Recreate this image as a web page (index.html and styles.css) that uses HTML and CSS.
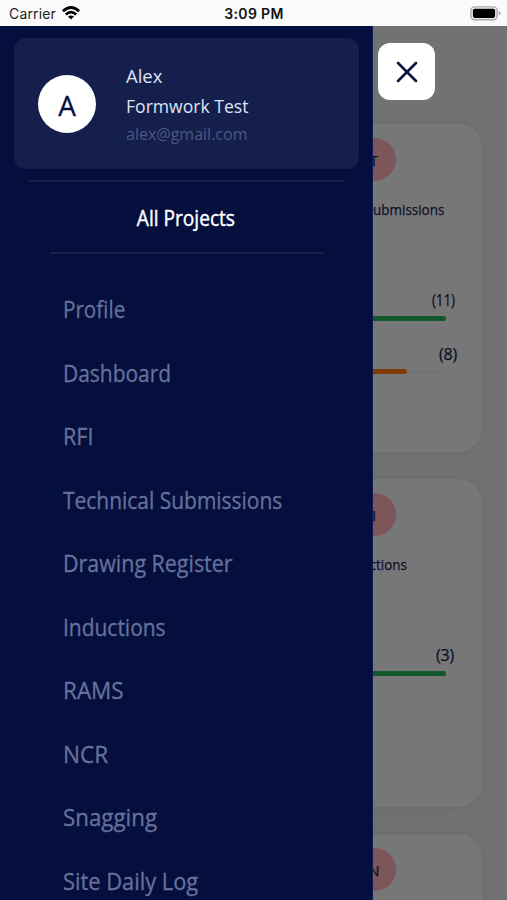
FILE: index.html
```html
<!DOCTYPE html>
<html lang="en">
<head>
<meta charset="utf-8">
<title>All Projects</title>
<link rel="stylesheet" href="styles.css">
</head>
<body>
<header class="status">
  <div class="carrier"><span>Carrier</span>
    <svg class="wifi" width="18" height="14" viewBox="0 0 18 14" fill="none" stroke="#000" stroke-width="2.7"><path d="M.9 5.2Q9-2.2 17.1 5.2"/><path d="M3.8 8.5Q9 3.7 14.2 8.5"/><path d="M9 13.6 6 10.6Q9 8.2 12 10.6Z" fill="#000" stroke="none"/></svg>
  </div>
  <div class="clock">3:09 PM</div>
  <svg class="battery" width="31" height="15" viewBox="0 0 31 15"><rect x=".9" y=".9" width="26.2" height="12.8" rx="3.6" fill="#eee" stroke="#aaa" stroke-width="1.4"/><rect x="2.9" y="2.7" width="22.2" height="9.2" rx="1.8"/><path d="M28.6 5q2 .8 2 2.3t-2 2.3z" fill="#aaa"/></svg>
</header>
<div class="stage">
  <main class="cards">
    <section class="card">
      <div class="badge">T</div>
      <h2>Technical Submissions</h2>
      <div class="count">(11)</div>
      <div class="track"><div class="bar green"></div></div>
      <div class="count second">(8)</div>
      <div class="track"><div class="bar orange"></div></div>
    </section>
    <section class="card">
      <div class="badge">I</div>
      <h2>Inductions</h2>
      <div class="count">(3)</div>
      <div class="track"><div class="bar green"></div></div>
    </section>
    <section class="card">
      <div class="badge">N</div>
    </section>
  </main>
  <div class="overlay">
    <aside class="drawer">
      <div class="profile">
        <div class="avatar">A</div>
        <div class="who">
          <div class="name">Alex</div>
          <div class="name company">Formwork Test</div>
          <div class="mail">alex@gmail.com</div>
        </div>
      </div>
      <div class="projects"><span>All Projects</span></div>
      <nav class="menu">
        <a>Profile</a>
        <a>Dashboard</a>
        <a>RFI</a>
        <a>Technical Submissions</a>
        <a>Drawing Register</a>
        <a>Inductions</a>
        <a>RAMS</a>
        <a>NCR</a>
        <a>Snagging</a>
        <a>Site Daily Log</a>
      </nav>
    </aside>
    <button class="close" aria-label="Close"><svg width="22" height="22" viewBox="0 0 22 22" fill="none" stroke="#07103f" stroke-width="2.6" stroke-linecap="round"><path d="m2 2 18 18M20 2 2 20"/></svg></button>
  </div>
</div>
</body>
</html>
```

FILE: styles.css
```css
* { box-sizing: border-box; }
body {
  margin: 0;
  height: 900px;
  overflow: hidden;
  display: flex;
  flex-direction: column;
  font-family: "Open Sans", "Noto Sans", sans-serif;
}
.status {
  flex: none;
  height: 26px;
  padding: 2px 6px 0 9px;
  display: grid;
  grid-template-columns: 1fr auto 1fr;
  align-items: center;
  background: #fafafa;
  font-family: Inter, sans-serif;
  font-size: 14px;
  line-height: 24px;
  color: #222;
}
.carrier { display: flex; align-items: center; gap: 6px; letter-spacing: .15px; }
.wifi { margin-top: -2px; }
.clock { font-weight: 600; color: #111; letter-spacing: .35px; margin-left: -2px; }
.battery { justify-self: end; margin-top: -2px; }
.stage { position: relative; flex: 1; min-height: 0; overflow: hidden; background: #727272; }
.cards { display: flex; flex-direction: column; gap: 27px; padding: 98px 25px 0 266px; }
.card {
  flex: none;
  height: 328px;
  padding-top: 14px;
  border-radius: 24px;
  background: #777;
  box-shadow: 0 0 14px rgba(0, 0, 0, .07);
  color: #0d1029;
  -webkit-text-stroke: .25px;
}
.badge {
  width: 43px;
  height: 43px;
  margin: 0 auto;
  border-radius: 50%;
  background: #7d5659;
  font-size: 15px;
  line-height: 44px;
  text-align: center;
}
.card h2 { margin: 19px 0 0; font-size: 14px; line-height: 20px; font-weight: 400; text-align: center; white-space: nowrap; transform: scaleX(.96); }
.count { margin: 68px 0 0; padding-right: 27px; text-align: right; font-size: 16px; line-height: 24px; letter-spacing: -.2px; transform: scaleX(.85); transform-origin: 188px 50%; }
.count.second { margin-top: 21px; padding-right: 25px; transform: none; }
.card:nth-child(2) .count { padding-right: 28px; transform: none; }
.track { width: 144px; height: 5px; margin: 3px 0 0 36px; border-radius: 3px; background: #747474; }
.count:not(.second) + .track { margin-top: 4px; }
.bar { height: 100%; border-radius: 3px; }
.green { background: #12592d; }
.orange { width: 105px; background: #813b06; }
.overlay { position: absolute; inset: 0; display: flex; align-items: flex-start; }
.drawer { width: 373px; height: 100%; overflow: hidden; background: #040f3d; border-right: 1px solid #0b1c5a; }
.profile { height: 131px; margin: 12px 13px 0 14px; padding: 0 24px; border-radius: 12px; display: flex; align-items: center; gap: 30px; background: #151f4c; }
.avatar { width: 58px; height: 58px; border-radius: 50%; background: #fff; color: #07103f; font-size: 28px; line-height: 61px; text-align: center; -webkit-text-stroke: .3px; }
.who { white-space: nowrap; }
.name { font-size: 19px; line-height: 30px; color: #dfe4f5; transform-origin: left; transform: scaleX(.97); }
.name.company { transform: scaleX(.925); }
.mail { font-size: 16.5px; line-height: 26px; color: #4d5780; transform-origin: left; transform: scaleX(.97); }
.projects { height: 74px; margin: 11px 29px 0; border-top: 2px solid #172146; font-size: 21px; line-height: 73px; text-align: center; color: #fff; -webkit-text-stroke: .4px; }
.projects span { display: inline-block; transform: scaleX(.91); }
.menu { margin: -2px 48px 0 50px; padding: 24px 0 0 13px; border-top: 2px solid #172146; display: flex; flex-direction: column; }
.menu a { height: 63.5px; line-height: 62.5px; font-size: 24px; color: #67719b; white-space: nowrap; -webkit-text-stroke: .3px; transform-origin: left; transform: scaleX(.873); }
.menu a:nth-child(1) { transform: scaleX(.86); }
.menu a:nth-child(3) { transform: scaleX(.9); }
.menu a:nth-child(5) { transform: scaleX(.893); }
.menu a:nth-child(7) { transform: scaleX(.937); }
.menu a:nth-child(8) { transform: scaleX(.94); }
.menu a:nth-child(9) { transform: scaleX(.93); }
.menu a:nth-child(10) { transform: scaleX(.91); }
.close { width: 57px; height: 57px; margin: 17px 0 0 5px; padding: 0; border: 0; border-radius: 12px; background: #fff; display: flex; align-items: center; justify-content: center; }
```
